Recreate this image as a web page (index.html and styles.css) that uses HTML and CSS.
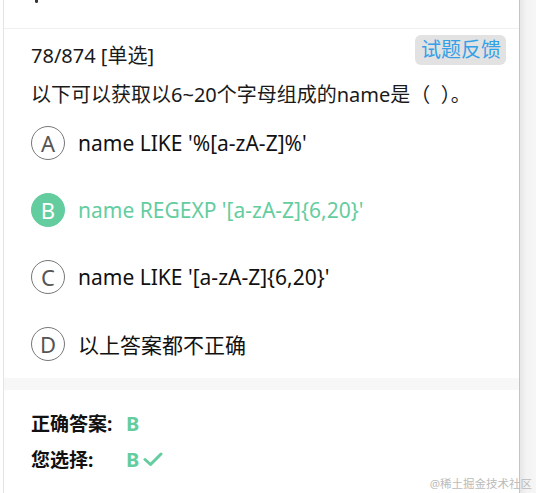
FILE: index.html
```html
<!DOCTYPE html>
<html lang="zh">
<head>
<meta charset="utf-8">
<link rel="stylesheet" href="styles.css">
</head>
<body>
<div class="page">
  <div class="panel">
    <div class="topbar"><span class="dot"></span></div>
    <div class="content">
      <div class="header">
        <div class="progress">78/874 [单选]</div>
        <div class="feedback">试题反馈</div>
      </div>
      <div class="question">以下可以获取以6~20个字母组成的name是（&nbsp;&nbsp;）。</div>
      <ul class="options">
        <li class="option"><span class="letter">A</span><span class="text">name LIKE '%[a-zA-Z]%'</span></li>
        <li class="option correct"><span class="letter">B</span><span class="text">name REGEXP '[a-zA-Z]{6,20}'</span></li>
        <li class="option"><span class="letter">C</span><span class="text">name LIKE '[a-zA-Z]{6,20}'</span></li>
        <li class="option"><span class="letter">D</span><span class="text">以上答案都不正确</span></li>
      </ul>
    </div>
    <div class="band"></div>
    <div class="answers">
      <div class="row"><span class="label">正确答案:</span><span class="value">B</span></div>
      <div class="row"><span class="label">您选择:</span><span class="value">B</span>
        <svg class="check" width="20" height="16" viewBox="0 0 20 16"><path d="M2 8.5 L7.5 13.5 L18 3" fill="none" stroke="#64cd9f" stroke-width="3" stroke-linecap="round" stroke-linejoin="round"/></svg>
      </div>
    </div>
    <div class="watermark">@稀土掘金技术社区</div>
  </div>
  <div class="shade"></div>
</div>
</body>
</html>
```
FILE: styles.css
```css
html, body {
  margin: 0;
  padding: 0;
  background: #fff;
}
body {
  font-family: "Noto Sans", "Noto Sans CJK SC", sans-serif;
  color: #111;
}
.page {
  display: flex;
  width: 536px;
  height: 493px;
  overflow: hidden;
}
.panel {
  position: relative;
  margin-left: 3px;
  width: 515px;
  border-left: 1px solid #e4e4e4;
  border-right: 1px solid #c4c4c4;
  background: #fff;
}
.shade {
  flex: 1;
  background: linear-gradient(to right, #e6e6e6, #f3f3f3 40%, #f6f6f6);
}
.topbar {
  height: 28px;
  border-bottom: 1px solid #f0f0f0;
  position: relative;
}
.dot {
  position: absolute;
  left: 31px;
  top: 0;
  width: 3px;
  height: 3px;
  background: #333;
  border-radius: 0 0 2px 2px;
}
.content {
  padding: 6px 13px 17px 27px;
}
.header {
  display: flex;
  justify-content: space-between;
  align-items: flex-start;
  height: 30px;
}
.progress {
  font-size: 20px;
  line-height: 24px;
  padding-top: 9px;
  color: #1a1a1a;
}
.feedback {
  background: #e2e2e2;
  color: #34a0e6;
  font-size: 20px;
  line-height: 30px;
  height: 30px;
  padding: 0 5px 0 6px;
  border-radius: 6px;
}
.question {
  margin-top: 15px;
  font-size: 20px;
  line-height: 30px;
  color: #1a1a1a;
}
.options {
  list-style: none;
  margin: 16px 0 0;
  padding: 0;
  display: flex;
  flex-direction: column;
  gap: 33px;
}
.option {
  display: flex;
  align-items: center;
  height: 34px;
}
.letter {
  box-sizing: border-box;
  width: 34px;
  height: 34px;
  border: 1px solid #777;
  border-radius: 50%;
  display: flex;
  align-items: center;
  justify-content: center;
  font-size: 22px;
  color: #555;
  margin-right: 13px;
}
.text {
  font-size: 21px;
  color: #111;
}
.correct .letter {
  background: #64cd9f;
  border-color: #64cd9f;
  color: #fff;
}
.correct .text {
  color: #64cd9f;
}
.band {
  height: 12px;
  background: #f7f7f7;
}
.answers {
  padding: 18px 0 0 27px;
  display: flex;
  flex-direction: column;
  gap: 6px;
}
.row {
  display: flex;
  align-items: center;
  height: 30px;
}
.label {
  width: 95px;
  font-size: 19px;
  font-weight: bold;
  color: #111;
}
.value {
  font-size: 20px;
  font-weight: bold;
  color: #64cd9f;
}
.check {
  margin-left: 4px;
}
.watermark {
  position: absolute;
  right: -13px;
  bottom: 2px;
  font-size: 11.5px;
  color: #bbb;
}
```
